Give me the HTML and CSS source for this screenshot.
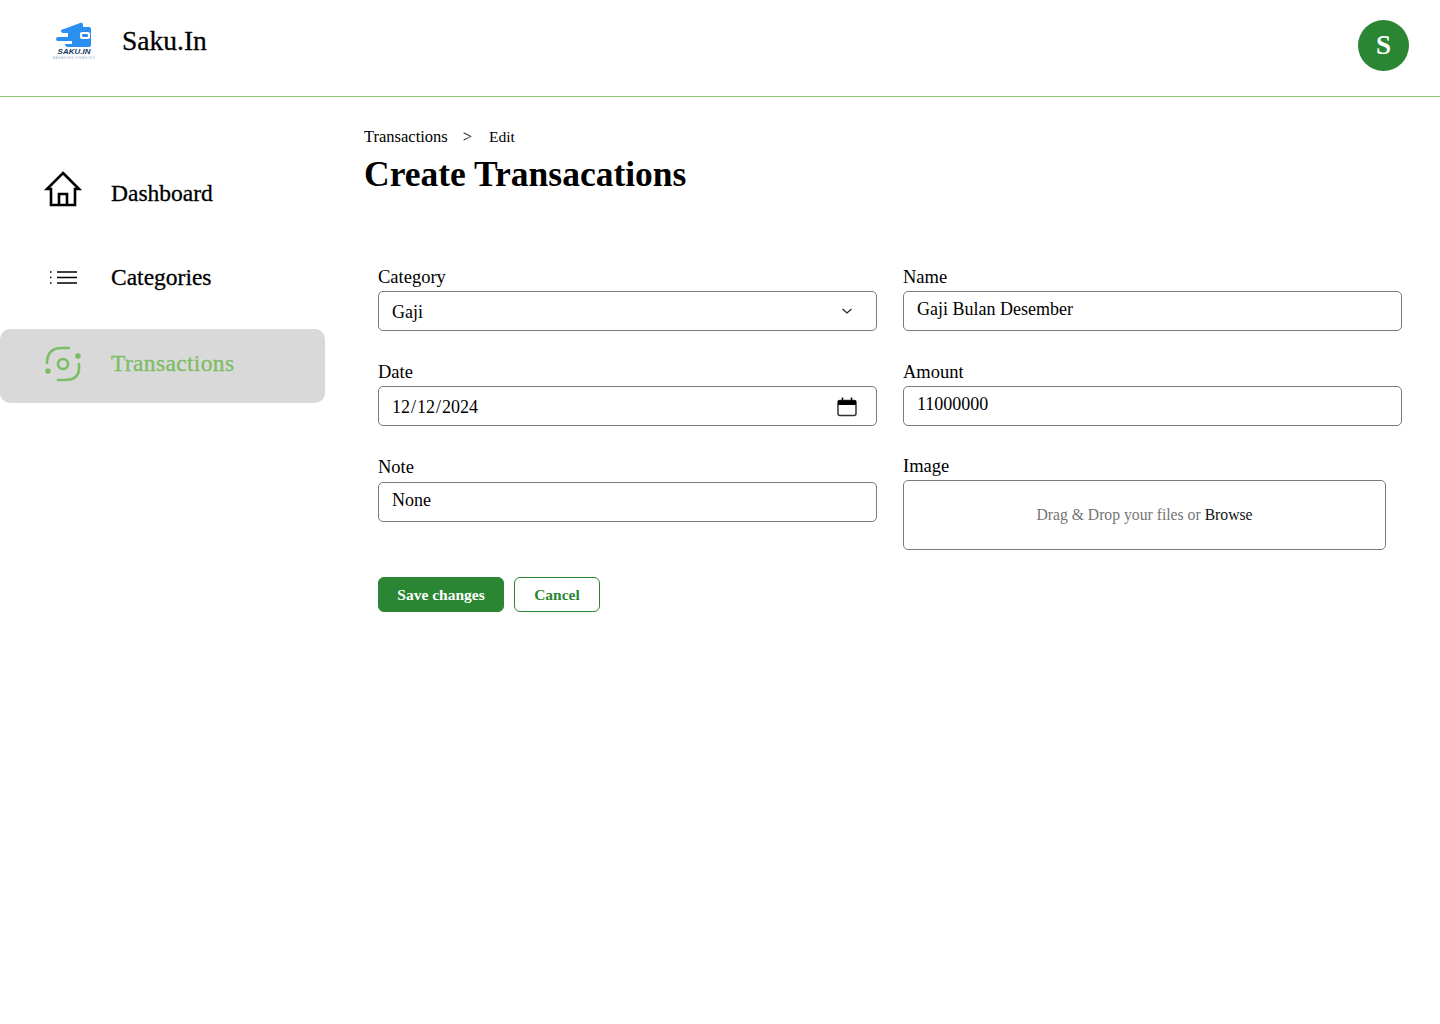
FILE: index.html
```html
<!DOCTYPE html>
<html lang="en">

<head>
  <meta charset="UTF-8">
  <meta name="viewport" content="width=device-width, initial-scale=1.0">
  <title>Saku.In</title>
  <link rel="stylesheet" href="styles.css">
</head>

<body>

  <header class="topbar">
    <div class="brand">
      <div class="logo">
        <svg class="logo-mark" width="36" height="26" viewBox="0 0 36 26">
          <path d="M8 7 L24 1 Q27 0 27 3 V5 H33 Q35 5 35 7 V23 Q35 25 33 25 H12 Q9 25 9 22 H16 V19 H2 Q0 19 0 17 Q0 15 2 15 H12 V11 H8 Q5 11 5 9 Q5 7 8 7 Z" fill="#2b8ff0"/>
          <rect x="24" y="10" width="10" height="7" rx="2" fill="#fff"/>
          <rect x="26" y="12" width="6" height="3" rx="1" fill="#2b8ff0"/>
        </svg>
        <span class="logo-name">SAKU.IN</span>
        <span class="logo-sub">MANAGING FINANCES</span>
      </div>
      <span class="brand-name">Saku.In</span>
    </div>
    <div class="avatar">S</div>
  </header>

  <div class="layout">
    <nav class="sidebar">
      <a class="nav-item nav-dashboard" href="#">
        <svg class="nav-icon" width="40" height="40" viewBox="0 0 40 40" fill="none" stroke="#000" stroke-width="2.6" stroke-linejoin="miter">
          <path d="M20 4 L36 20 H32 V36 H8 V20 H4 Z"/>
          <path d="M16 36 V25 H24 V36"/>
        </svg>
        <span class="nav-label">Dashboard</span>
      </a>
      <a class="nav-item nav-categories" href="#">
        <svg class="nav-icon" width="40" height="40" viewBox="0 0 40 40" fill="none" stroke="#000">
          <path d="M14 15 H34 M14 20.5 H34 M14 26 H34" stroke-width="1.6"/>
          <path d="M7 15 H8.5 M7 20.5 H8.5 M7 26 H8.5" stroke-width="1.6"/>
        </svg>
        <span class="nav-label">Categories</span>
      </a>
      <a class="nav-item active" href="#">
        <svg class="nav-icon" width="40" height="40" viewBox="0 0 40 40" fill="none" stroke="#7dbd63" stroke-width="2.6" stroke-linecap="round">
          <circle cx="20" cy="20" r="5"/>
          <path d="M4 19 C4 9 9 4 19 4 H26"/>
          <path d="M36 20 V24 C36 32 31 36 22 36 H15"/>
          <circle cx="5" cy="27" r="1.5" fill="#7dbd63"/>
          <circle cx="35" cy="12" r="1.5" fill="#7dbd63"/>
        </svg>
        <span class="nav-label">Transactions</span>
      </a>
    </nav>

    <main class="content">
      <div class="breadcrumb">
        <span>Transactions</span>
        <span class="crumb-sep">&gt;</span>
        <span class="crumb-last">Edit</span>
      </div>
      <h1 class="page-title">Create Transacations</h1>

      <form class="form-grid">
        <div class="field">
          <label for="category">Category</label>
          <div class="select-wrap">
            <select id="category" class="control">
              <option>Gaji</option>
            </select>
            <svg class="select-arrow" width="12" height="12" viewBox="0 0 12 12" fill="none" stroke="#222" stroke-width="1.2">
              <path d="M1.5 4 L6 8 L10.5 4"/>
            </svg>
          </div>
        </div>
        <div class="field">
          <label for="name">Name</label>
          <input id="name" class="control control-text" type="text" value="Gaji Bulan Desember">
        </div>

        <div class="field">
          <label for="date">Date</label>
          <div class="date-wrap">
            <input id="date" class="control control-date" type="date" value="2024-12-12">
            <svg class="date-icon" width="20" height="20" viewBox="0 0 20 20" fill="none">
              <rect x="1" y="3.5" width="18" height="15" rx="2" stroke="#333" stroke-width="1.5"/>
              <path d="M1 3.5 H19 V8 H1 Z" fill="#000"/>
              <path d="M5.5 0.5 V4 M14.5 0.5 V4" stroke="#000" stroke-width="1.5"/>
            </svg>
          </div>
        </div>
        <div class="field">
          <label for="amount">Amount</label>
          <input id="amount" class="control control-text" type="text" value="11000000">
        </div>

        <div class="field field-note">
          <label for="note">Note</label>
          <input id="note" class="control control-text" type="text" value="None">
        </div>
        <div class="field field-image">
          <label>Image</label>
          <div class="dropzone">Drag &amp; Drop your files or <span class="browse">Browse</span></div>
        </div>

        <div class="actions">
          <button class="btn btn-save" type="button">Save changes</button>
          <button class="btn btn-cancel" type="button">Cancel</button>
        </div>
      </form>
    </main>
  </div>

</body>
</html>
```

FILE: styles.css
```css
body {
  font-family: "Liberation Serif", serif;
  background-color: #fff;
  color: #000;
  margin: 0;
  padding: 0;
}

.topbar {
  height: 96px;
  border-bottom: 1px solid #8cc56f;
  display: flex;
  justify-content: space-between;
  align-items: flex-start;
  padding: 0 31px 0 52px;
}

.brand {
  display: flex;
  align-items: flex-start;
}

.logo {
  width: 44px;
  padding-top: 22px;
  display: flex;
  flex-direction: column;
  align-items: center;
}

.logo-mark {
  display: block;
}

.logo-name {
  font-family: "Liberation Sans", sans-serif;
  font-size: 8px;
  line-height: 8px;
  font-weight: bold;
  font-style: italic;
  color: #12365f;
}

.logo-sub {
  font-family: "Liberation Sans", sans-serif;
  font-size: 3px;
  line-height: 5px;
  white-space: nowrap;
  letter-spacing: 0.6px;
  color: #9aaec4;
}

.brand-name {
  font-size: 27.5px;
  line-height: 34px;
  margin: 24px 0 0 26px;
  -webkit-text-stroke: 0.3px #000;
}

.avatar {
  width: 51px;
  height: 51px;
  margin-top: 20px;
  border-radius: 50%;
  background-color: #2a8632;
  color: #fff;
  font-size: 27px;
  font-weight: bold;
  display: flex;
  align-items: center;
  justify-content: center;
}

.layout {
  display: flex;
}

.sidebar {
  width: 325px;
  padding-top: 62px;
  flex-shrink: 0;
}

.nav-item {
  height: 74px;
  margin-bottom: 12px;
  padding-left: 43px;
  display: flex;
  align-items: center;
  gap: 28px;
  font-size: 23.5px;
  color: #000;
  text-decoration: none;
  border-radius: 10px;
  -webkit-text-stroke: 0.3px currentColor;
}

.nav-label {
  padding-bottom: 5px;
}

.nav-icon {
  margin-bottom: 4px;
}

.nav-dashboard {
  margin-bottom: 10px;
}

.nav-dashboard .nav-icon {
  margin-bottom: 14px;
}

.nav-categories .nav-icon {
  margin-bottom: 6px;
}

.nav-item.active {
  background-color: #d9d9d9;
  color: #7dbd63;
  letter-spacing: 0.35px;
}

.content {
  flex: 1;
  padding: 31px 38px 0 39px;
}

.breadcrumb {
  font-size: 16.5px;
  line-height: 18px;
  display: flex;
}

.crumb-sep {
  margin: 0 17px 0 15px;
}

.crumb-last {
  font-size: 15.5px;
}

.page-title {
  font-size: 35.5px;
  line-height: 42px;
  font-weight: bold;
  margin: 7px 0 0 0;
}

.form-grid {
  display: grid;
  grid-template-columns: 499px 499px;
  column-gap: 26px;
  row-gap: 30px;
  padding: 71px 0 0 14px;
}

.field label {
  display: block;
  font-size: 18.5px;
  line-height: 20px;
  padding-top: 1px;
  margin-bottom: 4px;
}

.field-note label {
  margin-bottom: 5px;
}

.field-image {
  margin-top: -1px;
}

.control {
  width: 100%;
  height: 40px;
  padding: 0 13px;
  box-sizing: border-box;
  border: 1px solid #7a7a7a;
  border-radius: 5px;
  background-color: #fff;
  font-family: "Liberation Serif", serif;
  font-size: 18px;
  color: #000;
}

.control-text {
  padding-bottom: 3px;
}

.control-date {
  padding: 2px 13px 0 12px;
}

.control-date::-webkit-calendar-picker-indicator {
  opacity: 0;
}

.select-wrap,
.date-wrap {
  position: relative;
}

.select-wrap .control {
  appearance: none;
  -webkit-appearance: none;
  display: block;
  padding-top: 2px;
}

.select-arrow {
  position: absolute;
  right: 24px;
  top: 14px;
}

.date-icon {
  position: absolute;
  right: 20px;
  top: 11px;
  pointer-events: none;
}

.dropzone {
  width: 483px;
  height: 70px;
  box-sizing: border-box;
  border: 1px solid #7a7a7a;
  border-radius: 5px;
  display: flex;
  align-items: center;
  justify-content: center;
  gap: 4px;
  font-size: 15.7px;
  color: #767676;
}

.browse {
  color: #111;
}

.actions {
  grid-column: 1 / -1;
  display: flex;
  gap: 10px;
  margin-top: -3px;
}

.btn {
  height: 35px;
  border-radius: 6px;
  font-family: "Liberation Serif", serif;
  font-size: 15.5px;
  font-weight: bold;
  cursor: pointer;
}

.btn-save {
  width: 126px;
  background-color: #2a8632;
  border: 1px solid #2a8632;
  color: #fff;
}

.btn-cancel {
  width: 86px;
  background-color: #fff;
  border: 1px solid #2a8632;
  color: #2a8632;
}
```
